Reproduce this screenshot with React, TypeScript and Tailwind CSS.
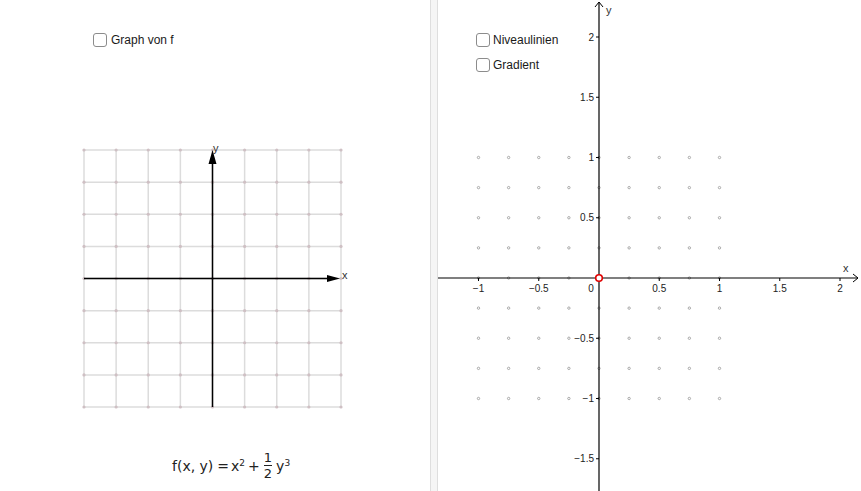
import React from "react";

const S = 120.5;
const OX = 161;
const OY = 278;
const X = (v: number) => OX + v * S;
const Y = (v: number) => OY - v * S;

function Check({ label, gap }: { label: string; gap: string }) {
  return (
    <label className={`flex h-[14px] items-center ${gap} text-[12px] leading-none text-[#1a1a1a]`}>
      <span className="h-[14px] w-[14px] shrink-0 rounded-[3px] border-[1.5px] border-[#8c8c8c] bg-white" />
      {label}
    </label>
  );
}

function LeftGrid() {
  const step = 257 / 8;
  const xs = Array.from({ length: 9 }, (_, i) => 84 + i * step);
  const ys = Array.from({ length: 9 }, (_, j) => 10 + j * step);
  return (
    <svg width={430} height={275} className="block">
      {xs.map((x, i) => (
        <line key={"v" + i} x1={x} y1={ys[0]} x2={x} y2={ys[8]} stroke="#dcdcdc" strokeWidth={1.5} />
      ))}
      {ys.map((y, j) => (
        <line key={"h" + j} x1={xs[0]} y1={y} x2={xs[8]} y2={y} stroke="#dcdcdc" strokeWidth={1.5} />
      ))}
      {xs.map((x, i) =>
        ys.map((y, j) => <circle key={i + "-" + j} cx={x} cy={y} r={1.6} fill="#cfc0c4" />)
      )}
      <line x1={xs[4]} y1={ys[8]} x2={xs[4]} y2={22} stroke="#000" strokeWidth={1.5} />
      <polygon points={`${xs[4]},10 ${xs[4] - 4},24 ${xs[4] + 4},24`} fill="#000" />
      <line x1={xs[0]} y1={ys[4]} x2={329} y2={ys[4]} stroke="#000" strokeWidth={1.5} />
      <polygon points={`340,${ys[4]} 327,${ys[4] - 3.5} 327,${ys[4] + 3.5}`} fill="#000" />
      <text x={213} y={12} fontSize={11} fill="#333" fontFamily="Liberation Sans, Arial, sans-serif">
        y
      </text>
      <text x={342} y={139} fontSize={11} fill="#333" fontFamily="Liberation Sans, Arial, sans-serif">
        x
      </text>
    </svg>
  );
}

function RightPlot() {
  const dots: [number, number][] = [];
  for (let i = -4; i <= 4; i++)
    for (let j = -4; j <= 4; j++) if (i !== 0 || j !== 0) dots.push([i / 4, j / 4]);
  const xl = [-1, -0.5, 0.5, 1, 1.5, 2];
  const yl = [2, 1.5, 1, 0.5, -0.5, -1, -1.5];
  const fmt = (v: number) => (v < 0 ? "\u2212" + Math.abs(v) : String(v));
  const font = "Liberation Sans, Arial, sans-serif";
  return (
    <svg width={423} height={491} className="absolute inset-0 block">
      {dots.map(([a, b], k) => (
        <circle key={k} cx={X(a)} cy={Y(b)} r={1.2} fill="#fff" stroke="#a0a0a0" strokeWidth={0.9} />
      ))}
      <line x1={0} y1={OY} x2={420} y2={OY} stroke="#000" strokeWidth={1.2} />
      <polyline points={`415,${OY - 4} 420,${OY} 415,${OY + 4}`} fill="none" stroke="#000" strokeWidth={1} />
      <line x1={OX} y1={2} x2={OX} y2={491} stroke="#000" strokeWidth={1.2} />
      <polyline points={`${OX - 4},7 ${OX},2 ${OX + 4},7`} fill="none" stroke="#000" strokeWidth={1} />
      {xl.map((v) => (
        <g key={"x" + v}>
          <line x1={X(v)} y1={OY} x2={X(v)} y2={OY + 3} stroke="#000" strokeWidth={1} />
          <text x={X(v)} y={OY + 14} fontSize={10} fill="#222" textAnchor="middle" fontFamily={font}>
            {fmt(v)}
          </text>
        </g>
      ))}
      <text x={OX - 8} y={OY + 14} fontSize={10} fill="#222" textAnchor="middle" fontFamily={font}>
        0
      </text>
      {yl.map((v) => (
        <g key={"y" + v}>
          <line x1={OX - 3} y1={Y(v)} x2={OX} y2={Y(v)} stroke="#000" strokeWidth={1} />
          <text x={OX - 5} y={Y(v) + 3.5} fontSize={10} fill="#222" textAnchor="end" fontFamily={font}>
            {fmt(v)}
          </text>
        </g>
      ))}
      <circle cx={OX} cy={OY} r={3.3} fill="#fff" stroke="#e00000" strokeWidth={1.6} />
      <text x={168} y={14} fontSize={11} fill="#333" fontFamily={font}>
        y
      </text>
      <text x={405} y={272} fontSize={11} fill="#333" fontFamily={font}>
        x
      </text>
    </svg>
  );
}

export default function App() {
  return (
    <div
      className="flex h-[491px] w-[861px] overflow-hidden bg-white"
      style={{ fontFamily: "'Liberation Sans', Arial, sans-serif" }}
    >
      <div className="flex w-[430px] shrink-0 flex-col">
        <div className="ml-[93px] mt-[33px]">
          <Check label="Graph von f" gap="gap-[4px]" />
        </div>
        <div className="mt-[93px]">
          <LeftGrid />
        </div>
        <div
          className="ml-[172px] mt-[36px] flex items-center text-[14px] leading-none text-[#222]"
          style={{ fontFamily: "'DejaVu Sans', sans-serif" }}
        >
          <span>f(x, y)</span>
          <span className="ml-[4px]">=</span>
          <span className="ml-[2px]">
            x<sup className="text-[9px]">2</sup>
          </span>
          <span className="ml-[3px]">+</span>
          <span className="mx-[4px] inline-flex flex-col items-center text-[13px] leading-none">
            <span>1</span>
            <span className="my-[1px] h-px w-[8px] bg-[#222]" />
            <span>2</span>
          </span>
          <span>
            y<sup className="text-[9px]">3</sup>
          </span>
        </div>
      </div>
      <div className="w-[8px] shrink-0 border-x border-[#dedede] bg-[#f5f5f5]" />
      <div className="relative flex-1">
        <RightPlot />
        <div className="relative ml-[38px] mt-[33px] flex flex-col gap-[11px]">
          <Check label="Niveaulinien" gap="gap-[3px]" />
          <Check label="Gradient" gap="gap-[3px]" />
        </div>
      </div>
    </div>
  );
}
